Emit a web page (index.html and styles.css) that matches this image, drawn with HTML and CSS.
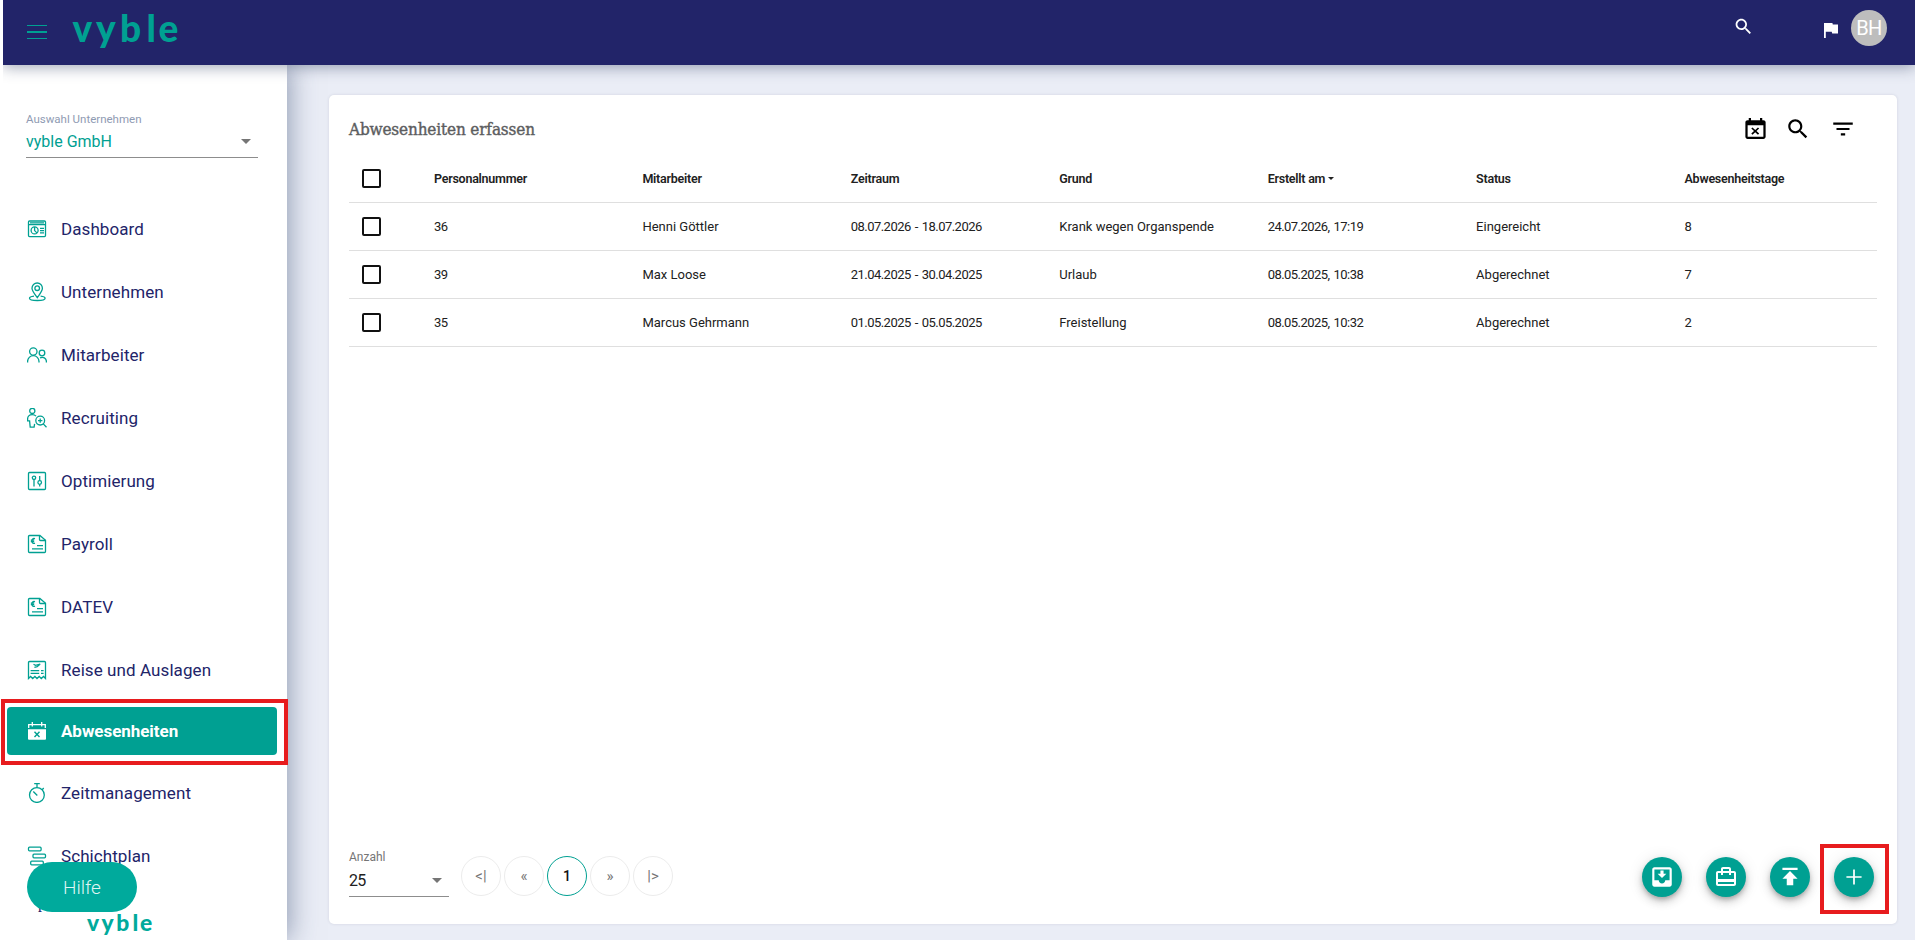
FILE: index.html
```html
<!DOCTYPE html>
<html lang="de">
<head>
  <meta charset="UTF-8" />
  <meta name="viewport" content="width=device-width, initial-scale=1.0" />
  <title>Abwesenheiten erfassen</title>
  <link rel="stylesheet" href="styles.css">
</head>
<body>
  <div class="app">
  <header class="topbar">
    <button class="menu-toggle" aria-label="Menü"><span></span><span></span><span></span></button>
    <svg class="logo" width="112" height="50" viewBox="0 0 112 50">
      <text y="34" x="1.5 25 49 75.5 87.5">vyble</text>
    </svg>
    <div class="topbar-right">
      <svg class="icon-search" width="21" height="21" viewBox="0 0 24 24"><path d="M15.5 14h-.79l-.28-.27C15.41 12.59 16 11.11 16 9.5 16 5.91 13.09 3 9.5 3S3 5.91 3 9.5 5.91 16 9.5 16c1.61 0 3.09-.59 4.23-1.57l.27.28v.79l5 4.99L20.49 19l-4.99-5zm-6 0C7.01 14 5 11.99 5 9.5S7.01 5 9.5 5 14 7.01 14 9.5 11.99 14 9.5 14z"/></svg>
      <svg class="icon-flag" width="14" height="15" viewBox="0 0 14 15"><path d="M0 0h8.4l.4 1.6H14v8.8H8.2l-.5-1.6H1.8V15H0z"/></svg>
      <div class="avatar">BH</div>
    </div>
  </header>

  <div class="layout">
    <aside class="sidebar">
      <div class="company">
        <label>Auswahl Unternehmen</label>
        <div class="company-select">vyble GmbH<i class="caret"></i></div>
      </div>

      <nav class="nav">
        <a class="nav-item">
          <svg width="20" height="20" viewBox="0 0 20 20"><rect x="1.5" y="2" width="17" height="15.6" rx="1"/><path d="M1.5 5.6h17M3 3.8h14"/><circle cx="7.6" cy="11.4" r="3.5"/><path d="M7.6 8v3.6l2.3 2.3M13 9.4h4M13 11.6h4M13 13.8h4"/></svg>
          <span>Dashboard</span>
        </a>
        <a class="nav-item">
          <svg width="20" height="20" viewBox="0 0 20 20"><path d="M10.3 15.6C7.5 11.6 5 8.9 5 6.200a5.200 5.200 0 0 1 10.400 0c0 2.700-2.300 5.400-5.100 9.400z"/><circle cx="10.200" cy="6.200" r="2.300"/><path d="M7 14.100c-2.600.3-4.500 1-4.500 2.100 0 1.500 3.500 2.300 7.800 2.300s7.800-.8 7.800-2.300c0-1.100-1.800-1.800-4.500-2.100"/></svg>
          <span>Unternehmen</span>
        </a>
        <a class="nav-item">
          <svg width="20" height="20" viewBox="0 0 20 20"><circle cx="6.300" cy="6.500" r="3.700"/><path d="M.6 17.600v-1.200a5.700 5.700 0 0 1 11.400 0v1.200"/><circle cx="15" cy="8" r="2.800"/><path d="M13 12.900c3.200-1.600 6.400.4 6.400 3.600v1.100"/></svg>
          <span>Mitarbeiter</span>
        </a>
        <a class="nav-item">
          <svg width="20" height="20" viewBox="0 0 20 20"><circle cx="5.300" cy="2.900" r="2.600"/><path d="M9 8.100C8 6.900 6.800 6.600 5.200 6.600 2.200 6.600.6 8.500.6 11v1.900h2l.6 6.300h3.900l.5-3.300"/><circle cx="13.200" cy="12.600" r="4.400"/><path d="M11 12.600h4.400M13.200 10.400v4.400M16.300 15.900l3.200 3.300"/></svg>
          <span>Recruiting</span>
        </a>
        <a class="nav-item">
          <svg width="20" height="20" viewBox="0 0 20 20"><rect x="1.500" y="1.500" width="17" height="17" rx="1"/><circle cx="7" cy="6.800" r="1.700"/><path d="M7 8.500v7M12.700 5v4.700M12.700 13.300v2.200"/><circle cx="12.700" cy="11.500" r="1.800"/></svg>
          <span>Optimierung</span>
        </a>
        <a class="nav-item">
          <svg width="20" height="20" viewBox="0 0 20 20"><path d="M2.500 1.500h10.400l5.600 4.700v11.300a1 1 0 0 1-1 1h-15a1 1 0 0 1-1-1v-15a1 1 0 0 1 1-1z"/><path d="M12.500 1.700v3.800a1 1 0 0 0 1 1h4.800M8 4.700C6 4 4.900 5.200 4.900 6.900S6 9.800 8 9.100M3.800 6.200h3.400M3.800 7.700h3.400M10 11.600h6M5 14.900h11"/></svg>
          <span>Payroll</span>
        </a>
        <a class="nav-item">
          <svg width="20" height="20" viewBox="0 0 20 20"><path d="M2.500 1.500h10.400l5.600 4.700v11.300a1 1 0 0 1-1 1h-15a1 1 0 0 1-1-1v-15a1 1 0 0 1 1-1z"/><path d="M12.500 1.700v3.800a1 1 0 0 0 1 1h4.800M8 4.700C6 4 4.900 5.200 4.900 6.900S6 9.800 8 9.100M3.800 6.200h3.400M3.800 7.700h3.400M10 11.600h6M5 14.900h11"/></svg>
          <span>DATEV</span>
        </a>
        <a class="nav-item">
          <svg width="20" height="20" viewBox="0 0 20 20"><path d="M1.500 18.500v-16a1 1 0 0 1 1-1h15a1 1 0 0 1 1 1v16l-2-2-2.200 2-2.100-2-2.200 2-2.100-2-2.200 2-2.100-2z"/><path d="M3.600 10.600h8.600M3.600 13.400h8.600M14 10.600h2.600M14 13.400h2.600"/><path d="M6.500 4.300l2 1.100 4.700-1.300-3 2.600-2.800.6"/></svg>
          <span>Reise und Auslagen</span>
        </a>
        <a class="nav-item active">
          <svg width="20" height="20" viewBox="0 0 20 20"><path class="solid" d="M1 8.200h18v9.500a1 1 0 0 1-1 1H2a1 1 0 0 1-1-1z"/><path d="M1.700 7V3.700h16.600V7M5.300 1v4.500M14.700 1v4.500"/><path class="cross" d="M7.500 10.800l5 5.200M12.500 10.800l-5 5.200"/></svg>
          <span>Abwesenheiten</span>
        </a>
        <a class="nav-item">
          <svg width="20" height="20" viewBox="0 0 20 20"><circle cx="9.900" cy="12" r="7.400"/><path d="M7.200.7h5.600M10 .7v3.800M10.300 12.500L6.300 8.500M15.200 6.700l1.500-1.700"/></svg>
          <span>Zeitmanagement</span>
        </a>
        <a class="nav-item">
          <svg width="20" height="20" viewBox="0 0 20 20"><rect x="1.500" y="1.200" width="12.600" height="3.600" rx="1"/><rect x="6" y="8.200" width="12.500" height="3.600" rx="1"/><rect x="3.700" y="15.200" width="12.600" height="3.600" rx="1"/></svg>
          <span>Schichtplan</span>
        </a>
      </nav>

      <div class="powered">powered by</div>
      <svg class="logo-small" width="69" height="31" viewBox="0 0 112 50">
        <text y="33" x="1.5 25 49 75.5 87.5">vyble</text>
      </svg>
      <button class="help-btn">Hilfe</button>
    </aside>

    <main class="card">
      <div class="card-head">
        <h1>Abwesenheiten erfassen</h1>
        <div class="card-tools">
          <svg width="27" height="25" viewBox="0 0 24 24" preserveAspectRatio="none"><path d="M9.310 17l2.440-2.440L14.190 17l1.060-1.060-2.440-2.440 2.440-2.440L14.190 10l-2.440 2.440L9.310 10l-1.060 1.060 2.440 2.440-2.440 2.440L9.310 17zM19 3h-1V1h-2v2H8V1H6v2H5c-1.110 0-1.990.9-1.990 2L3 19c0 1.100.89 2 2 2h14c1.100 0 2-.9 2-2V5c0-1.100-.9-2-2-2zm0 16H5V8h14v11z"/></svg>
          <svg width="26" height="26" viewBox="0 0 24 24"><path d="M15.500 14h-.79l-.28-.27C15.410 12.590 16 11.110 16 9.500 16 5.910 13.090 3 9.500 3S3 5.910 3 9.500 5.910 16 9.500 16c1.610 0 3.090-.59 4.230-1.570l.27.28v.79l5 4.990L20.490 19l-4.990-5zm-6 0C7.010 14 5 11.990 5 9.500S7.010 5 9.500 5 14 7.010 14 9.500 11.990 14 9.500 14z"/></svg>
          <svg width="26" height="26" viewBox="0 0 24 24"><path d="M10 18h4v-2h-4v2zM3 6v2h18V6H3zm3 7h12v-2H6v2z"/></svg>
        </div>
      </div>

      <table class="absences">
        <thead>
          <tr>
            <th class="check"><span class="box"></span></th>
            <th>Personalnummer</th>
            <th>Mitarbeiter</th>
            <th>Zeitraum</th>
            <th>Grund</th>
            <th>Erstellt am<i class="sort"></i></th>
            <th>Status</th>
            <th>Abwesenheitstage</th>
          </tr>
        </thead>
        <tbody>
          <tr>
            <td class="check"><span class="box"></span></td>
            <td class="num">36</td>
            <td>Henni Göttler</td>
            <td class="num">08.07.2026 - 18.07.2026</td>
            <td>Krank wegen Organspende</td>
            <td class="num">24.07.2026, 17:19</td>
            <td>Eingereicht</td>
            <td class="num">8</td>
          </tr>
          <tr>
            <td class="check"><span class="box"></span></td>
            <td class="num">39</td>
            <td>Max Loose</td>
            <td class="num">21.04.2025 - 30.04.2025</td>
            <td>Urlaub</td>
            <td class="num">08.05.2025, 10:38</td>
            <td>Abgerechnet</td>
            <td class="num">7</td>
          </tr>
          <tr>
            <td class="check"><span class="box"></span></td>
            <td class="num">35</td>
            <td>Marcus Gehrmann</td>
            <td class="num">01.05.2025 - 05.05.2025</td>
            <td>Freistellung</td>
            <td class="num">08.05.2025, 10:32</td>
            <td>Abgerechnet</td>
            <td class="num">2</td>
          </tr>
        </tbody>
      </table>

      <div class="card-foot">
        <div class="page-size">
          <label>Anzahl</label>
          <div class="page-size-select">25<i class="caret"></i></div>
        </div>
        <div class="pager">
          <span>&lt;|</span>
          <span>«</span>
          <span class="current">1</span>
          <span>»</span>
          <span>|&gt;</span>
        </div>
        <div class="actions">
          <button class="fab" aria-label="Importieren"><svg width="26" height="26" viewBox="0 0 24 24"><path d="M16 9h-2.550V6h-2.900v3H8l4 4 4-4zm3-6H4.990C3.880 3 3 3.900 3 5v14c0 1.100.88 2 1.990 2H19c1.100 0 2-.9 2-2V5c0-1.100-.9-2-2-2zm0 12h-4c0 1.660-1.350 3-3 3s-3-1.340-3-3H4.990V5H19v10z"/></svg></button>
          <button class="fab" aria-label="Urlaub"><svg width="24" height="24" viewBox="0 0 24 24"><path d="M20 6h-3V4c0-1.110-.89-2-2-2H9c-1.110 0-2 .89-2 2v2H4c-1.110 0-2 .89-2 2v11c0 1.110.89 2 2 2h16c1.110 0 2-.89 2-2V8c0-1.110-.89-2-2-2zM9 4h6v2H9V4zm11 15H4v-2h16v2zm0-5H4V8h3v2h2V8h6v2h2V8h3v6z"/></svg></button>
          <button class="fab" aria-label="Hochladen"><svg width="26" height="26" viewBox="0 0 24 24"><path d="M5 3.500v2h14v-2H5zm0 10h4v6h6v-6h4l-7-7-7 7z"/></svg></button>
          <button class="fab" aria-label="Neu"><svg width="26" height="26" viewBox="0 0 24 24"><path d="M19 12.800h-6.200V19h-1.600v-6.200H5v-1.600h6.200V5h1.600v6.200H19z"/></svg></button>
        </div>
      </div>
    </main>
  </div>
  </div>

  <div class="marker marker-nav"></div>
  <div class="marker marker-add"></div>
</body>
</html>
```
FILE: styles.css
```css
:root {
  --navy: #222469;
  --teal: #00a092;
  --page-bg: #eaedf6;
  --marker: #e71c1e;
}

* {
  box-sizing: border-box;
}

body {
  margin: 0;
  padding-left: 3px;
  height: 940px;
  overflow: hidden;
  background: #fff;
  font-family: Roboto, "Noto Sans", sans-serif;
  font-size: 13px;
  color: #212121;
}

button {
  border: none;
  padding: 0;
  font-family: inherit;
  cursor: pointer;
}

label {
  display: block;
}

.app {
  height: 940px;
  overflow: hidden;
}

/* top bar */
.topbar {
  position: relative;
  z-index: 3;
  display: flex;
  align-items: flex-start;
  height: 65px;
  padding: 0 28px 0 24px;
  background: var(--navy);
  box-shadow: 0 2px 14px rgba(40, 55, 90, 0.45);
}

.menu-toggle {
  display: flex;
  flex-direction: column;
  gap: 5px;
  width: 20px;
  margin-top: 25px;
  background: none;
}

.menu-toggle span {
  height: 1.4px;
  background: var(--teal);
}

.logo {
  margin: 8px 0 0 24px;
}

.logo text,
.logo-small text {
  font: 900 37px Lato, sans-serif;
  fill: var(--teal);
}

.topbar-right {
  display: flex;
  align-items: flex-start;
  margin-left: auto;
}

.topbar-right svg {
  fill: #fff;
}

.icon-search {
  margin: 16px 70px 0 0;
}

.icon-flag {
  margin: 23px 13px 0 0;
}

.avatar {
  width: 36px;
  height: 36px;
  margin-top: 10px;
  border-radius: 50%;
  background: #bdbdbd;
  color: #fff;
  font-size: 20px;
  line-height: 36px;
  letter-spacing: -0.5px;
  text-align: center;
}

.layout {
  display: flex;
  height: 875px;
  background: var(--page-bg);
}

/* sidebar */
.sidebar {
  position: relative;
  z-index: 2;
  width: 284px;
  background: #fff;
  box-shadow: 2px 0 26px rgba(50, 70, 110, 0.5);
}

.company {
  width: 232px;
  margin: 47px 0 0 23px;
  border-bottom: 1px solid #8d8d8d;
}

.company label {
  font-size: 11.5px;
  line-height: 14px;
  color: #8f9bb3;
}

.company-select,
.page-size-select {
  display: flex;
  align-items: center;
  justify-content: space-between;
  font-size: 16px;
}

.company-select {
  height: 31px;
  padding: 0 7px 0 0;
  color: var(--teal);
}

.caret {
  border: 5px solid transparent;
  border-top-color: #757575;
  border-bottom: none;
}

.nav {
  display: flex;
  flex-direction: column;
  gap: 15px;
  padding: 47px 10px 0 4px;
}

.nav-item {
  display: flex;
  align-items: center;
  height: 48px;
  padding-left: 20px;
  border-radius: 4px;
  font-size: 17px;
  letter-spacing: 0.08px;
  color: var(--navy);
}

.nav-item svg {
  margin-right: 14px;
  fill: none;
  stroke: var(--teal);
  stroke-width: 1.3;
}

.nav-item.active {
  margin: -2px 0 -1px;
  background: var(--teal);
  color: #fff;
  font-weight: bold;
  letter-spacing: -0.05px;
}

.nav-item.active svg {
  stroke: #fff;
}

.nav-item .solid {
  fill: #fff;
  stroke: none;
}

.nav-item .cross {
  stroke: var(--teal);
  stroke-width: 1.4;
}

.powered {
  padding: 14px 0 0 35px;
  font: 16px/18px "Liberation Serif", serif;
  color: var(--navy);
}

.logo-small {
  display: block;
  margin: -1px 0 0 83px;
}

.logo-small text {
  fill: #00aa9c;
}

.help-btn {
  position: absolute;
  left: 24px;
  bottom: 28px;
  width: 110px;
  height: 50px;
  border-radius: 25px;
  background: #00aa9c;
  color: #dff5f3;
  font-size: 19px;
  font-weight: 300;
}

/* card */
.card {
  display: flex;
  flex-direction: column;
  width: 1568px;
  height: 829px;
  margin: 30px 0 0 42px;
  padding: 0 20px;
  border-radius: 5px;
  background: #fff;
  box-shadow: 0 0 3px rgba(60, 70, 100, 0.15);
}

.card-head {
  display: flex;
  align-items: center;
  justify-content: space-between;
  height: 60px;
  padding: 8px 21px 0 0;
}

.card-head h1 {
  margin: 0;
  font: 17px "DejaVu Serif Condensed", "DejaVu Serif", serif;
  font-stretch: condensed;
  letter-spacing: -0.15px;
  color: #5c5d60;
  -webkit-text-stroke: 0.4px #5c5d60;
}

.card-tools {
  display: flex;
  align-items: center;
  gap: 16px;
}

.card-tools svg:last-child {
  margin-left: 3px;
}

.absences {
  width: 1528px;
  table-layout: fixed;
  border-collapse: collapse;
}

.absences th,
.absences td {
  height: 48px;
  padding: 0 0 0 16px;
  border-bottom: 1px solid #dfdfdf;
  text-align: left;
  vertical-align: middle;
}

.absences th {
  height: 47px;
  font-size: 12.5px;
  font-weight: 600;
  letter-spacing: -0.25px;
}

.absences .num {
  letter-spacing: -0.55px;
  word-spacing: 1.4px;
}

.absences .check {
  width: 69px;
  padding-left: 13px;
}

.box {
  display: block;
  width: 19px;
  height: 19px;
  border: 2px solid #111;
  border-radius: 2px;
}

.sort {
  display: inline-block;
  margin-left: 3px;
  vertical-align: 3px;
  border: 3.5px solid transparent;
  border-top-color: #212121;
  border-bottom: none;
}

.card-foot {
  display: flex;
  align-items: flex-start;
  height: 75px;
  margin-top: auto;
}

.page-size {
  width: 100px;
  border-bottom: 1px solid #8d8d8d;
}

.page-size label {
  font-size: 12px;
  line-height: 16px;
  color: #757575;
}

.page-size-select {
  height: 31px;
  padding-right: 7px;
  letter-spacing: -0.8px;
}

.pager {
  display: flex;
  gap: 3px;
  margin: 7px 0 0 12px;
}

.pager span {
  width: 40px;
  height: 40px;
  border: 1px solid #ececec;
  border-radius: 50%;
  color: #757575;
  font-size: 15px;
  line-height: 38px;
  text-align: center;
}

.pager .current {
  border-color: var(--teal);
  color: #111;
  font-size: 14px;
  font-weight: 500;
}

.actions {
  display: flex;
  gap: 24px;
  margin: 8px 3px 0 auto;
}

.fab {
  display: flex;
  align-items: center;
  justify-content: center;
  width: 40px;
  height: 40px;
  border-radius: 50%;
  background: var(--teal);
  box-shadow: 0 3px 5px -1px rgba(0, 0, 0, 0.25), 0 5px 10px rgba(0, 0, 0, 0.14), 0 1px 16px rgba(0, 0, 0, 0.1);
}

.fab svg {
  fill: #fff;
}

/* highlight frames over the page */
.marker {
  position: absolute;
  z-index: 5;
  border: 4px solid var(--marker);
}

.marker-nav {
  left: 1px;
  top: 699px;
  width: 287px;
  height: 66px;
}

.marker-add {
  left: 1820px;
  top: 844px;
  width: 69px;
  height: 70px;
}
```
